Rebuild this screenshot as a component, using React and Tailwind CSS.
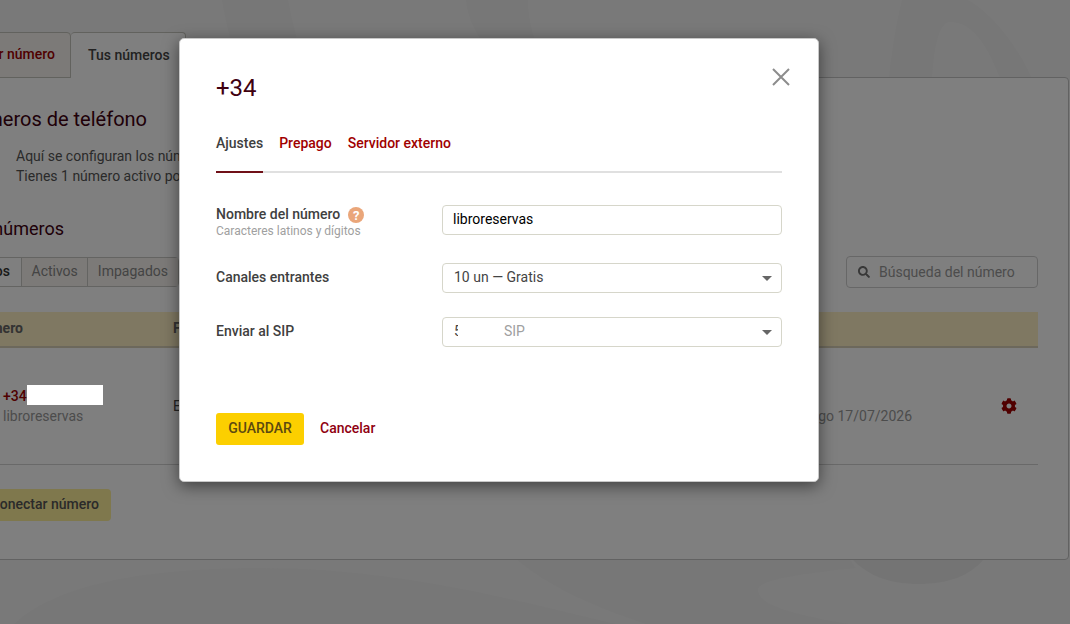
import { FaSearch, FaCog } from "react-icons/fa";

const filters = ["Todos", "Activos", "Impagados"];
const modalTabs = ["Ajustes", "Prepago", "Servidor externo"];

/* ── Fondo decorativo ──────────────────────────────────────────── */
function Waves() {
  return (
    <svg className="absolute inset-0" width="1070" height="624" fill="none">
      <path d="M222 0C226 24 232 48 242 78H306C300 48 292 22 288 0Z" fill="#eeeeee" />
      <path d="M466 0C468 20 476 32 482 42H536C530 28 528 12 528 0Z" fill="#eeeeee" />
      <path d="M902 0C896 24 892 50 889 78H932C934 44 940 22 950 22C974 22 988 48 1000 78H1032C1015 42 990 12 968 0Z" fill="#eeeeee" />
      <path d="M14 624C60 582 150 568 262 568C390 568 500 596 616 624Z" fill="#efefef" />
      <path d="M516 559C545 584 590 606 646 624H850C790 614 758 604 758 590C758 580 800 574 856 568L850 559Z" fill="#efefef" />
      <path d="M852 559C868 576 890 584 918 584C948 584 970 576 984 559Z" fill="#e9e9e9" />
    </svg>
  );
}

function Field({ label, hint, help, className = "", children }) {
  return (
    <div className={`flex ${className}`}>
      <div className="w-[226px] shrink-0">
        <div className="flex h-[18px] items-center gap-2 text-sm font-medium text-[#404040]">
          {label}
          {help && (
            <span className="mt-[2px] flex h-4 w-4 items-center justify-center rounded-full bg-[#eaa67a] text-[13px] leading-none font-bold text-white">
              ?
            </span>
          )}
        </div>
        {hint && <p className="text-xs leading-[17px] text-[#a0a0a0]">{hint}</p>}
      </div>
      {children}
    </div>
  );
}

function Select({ children }) {
  return (
    <button
      type="button"
      className="-mt-[5px] flex h-[30px] w-[340px] items-center rounded border border-[#d6d6ca] pr-[9px] pb-[2px] pl-[11px] text-sm text-[#444]"
    >
      {children}
      <svg className="mt-[3px] ml-auto" width="10" height="5" viewBox="0 0 10 5">
        <path d="M0 0H10L5 5Z" fill="#666" />
      </svg>
    </button>
  );
}

function NumbersPage() {
  return (
    <div className="-ml-[60px] w-[1129px] pt-8">
      {/* Pestañas */}
      <div className="flex h-[46px] font-medium">
        <div className="flex w-[131px] items-center justify-end rounded-tr border border-[#c4c4bc] bg-[#f8f5f0] pr-[15px] pb-[2px] whitespace-nowrap text-[#a00000]">
          Conectar número
        </div>
        <div className="relative z-[1] flex w-[115px] items-center rounded-t border border-b-0 border-l-0 border-[#c4c4bc] bg-white pb-[2px] pl-[17px] text-[#444]">
          Tus números
        </div>
      </div>

      <div className="-mt-px h-[483px] rounded-[4px] border border-[#c4c4c4] bg-white pt-[29px] pr-[30px]">
        <h1 className="w-[206px] text-right text-xl leading-6 text-[#400010]">Números de teléfono</h1>
        <p className="mt-[15px] pl-[75px] leading-5 text-[#555]">
          Aquí se configuran los números de teléfono.
          <br />
          Tienes 1 número activo por el momento.
        </p>
        <h2 className="mt-8 w-[123px] text-right text-lg leading-[22px] text-[#400010]">Tus números</h2>

        {/* Filtros y búsqueda */}
        <div className="mt-4 flex h-8 items-center justify-between pl-[10px]">
          <div className="flex h-[30px] rounded border border-[#c8c8c4]">
            {filters.map((name, i) => (
              <span
                key={name}
                className={[
                  "flex items-center pb-[2px]",
                  i === 0
                    ? "w-[69px] justify-end pr-[11px] font-medium text-[#333]"
                    : "border-l border-[#c8c8c4] bg-[#f8f5f0] px-[9.5px] text-[#888]",
                ].join(" ")}
              >
                {name}
              </span>
            ))}
          </div>
          <div className="flex h-8 w-[192px] items-center gap-[9px] rounded border border-[#cfcfcf] pb-[1px] pl-[11px] text-[#999]">
            <FaSearch size={12} className="text-[#707070]" />
            Búsqueda del número
          </div>
        </div>

        {/* Tabla */}
        <div className="mt-6 grid h-9 grid-cols-[232px_628px_1fr] items-center border-b-2 border-[#d8d0b8] bg-[#fff0c4] font-bold text-[#666]">
          <span className="w-[82px] pb-[2px] text-right">Número</span>
          <span className="pb-[2px]">Función</span>
          <span className="-ml-[60px] w-[43px] pb-[2px] text-right">Estado</span>
        </div>
        <div className="grid h-[117px] grid-cols-[232px_568px_1fr_59px] items-center border-b border-[#d2d2d2] leading-5">
          <div className="pl-[62px]">
            <div className="flex font-medium text-[#a00000]">
              +34
              <span className="relative z-30 -mt-[1px] h-5 w-[76px] bg-white" />
            </div>
            <div className="text-[#999]">libroreservas</div>
          </div>
          <span className="text-[#444]">Entrante</span>
          <div>
            <div className="w-[55px] text-right text-[#444]">Activado</div>
            <div className="flex w-[171px] justify-end whitespace-nowrap text-[#999]">
              Siguiente pago 17/07/2026
            </div>
          </div>
          <FaCog size={16} className="ml-[22px] text-[#a00000]" />
        </div>
        <button
          type="button"
          className="mt-6 flex h-8 w-[170px] items-center justify-end rounded bg-[#fff09a] pr-3 pb-[2px] font-medium text-[#555]"
        >
          Conectar número
        </button>
      </div>
    </div>
  );
}

function SettingsModal() {
  return (
    <div
      role="dialog"
      className="absolute top-[38px] left-[179px] z-20 flex h-[444px] w-[640px] flex-col rounded-[5px] border border-[#c8c8c8] bg-white px-9 pt-[26px] shadow-[0_4px_16px_rgba(0,0,0,0.5)]"
    >
      <div className="flex justify-between">
        <h2 className="pt-[7px] text-2xl leading-8 text-[#400010]">+34</h2>
        <button type="button" aria-label="Cerrar" className="-mr-2 flex h-6 w-[18px] items-center">
          <svg width="18" height="18" viewBox="0 0 18 18" stroke="#8c8c8c" strokeWidth="2">
            <path d="M1 1L17 17M17 1L1 17" />
          </svg>
        </button>
      </div>

      <nav className="mt-[29px] flex h-[40px] gap-4 border-b-2 border-[#e0e0e0] font-medium">
        {modalTabs.map((tab, i) => (
          <a
            key={tab}
            className={i === 0 ? "h-[40px] border-b-2 border-[#701018] text-[#404040]" : "h-[40px] text-[#a00000]"}
          >
            {tab}
          </a>
        ))}
      </nav>

      <Field label="Nombre del número" hint="Caracteres latinos y dígitos" help className="mt-8 h-[63px]">
        <input
          type="text"
          defaultValue="libroreservas"
          className="h-[30px] w-[340px] rounded border border-[#d6d6ca] pb-[2px] pl-[10px] text-sm text-black outline-none"
        />
      </Field>
      <Field label="Canales entrantes" className="h-[54px]">
        <Select>10 un — Gratis</Select>
      </Field>
      <Field label="Enviar al SIP">
        <Select>
          <span className="w-[4px] overflow-hidden">5</span>
          <span className="ml-[46px] text-[#a0a0a0]">SIP</span>
        </Select>
      </Field>

      <div className="mt-[66px] flex items-center gap-4 font-medium">
        <button type="button" className="h-8 w-[88px] rounded-[3px] bg-[#fccf00] pb-[2px] text-[#5c4a10]">
          GUARDAR
        </button>
        <a className="pb-[2px] text-[#900010]">Cancelar</a>
      </div>
    </div>
  );
}

export default function App() {
  return (
    <div className="relative h-[624px] w-[1070px] overflow-hidden bg-[#f3f3f3] font-[Roboto,sans-serif] text-sm">
      <Waves />
      <div className="relative">
        <NumbersPage />
      </div>
      <div className="absolute inset-0 z-10 bg-black/50" />
      <SettingsModal />
    </div>
  );
}
